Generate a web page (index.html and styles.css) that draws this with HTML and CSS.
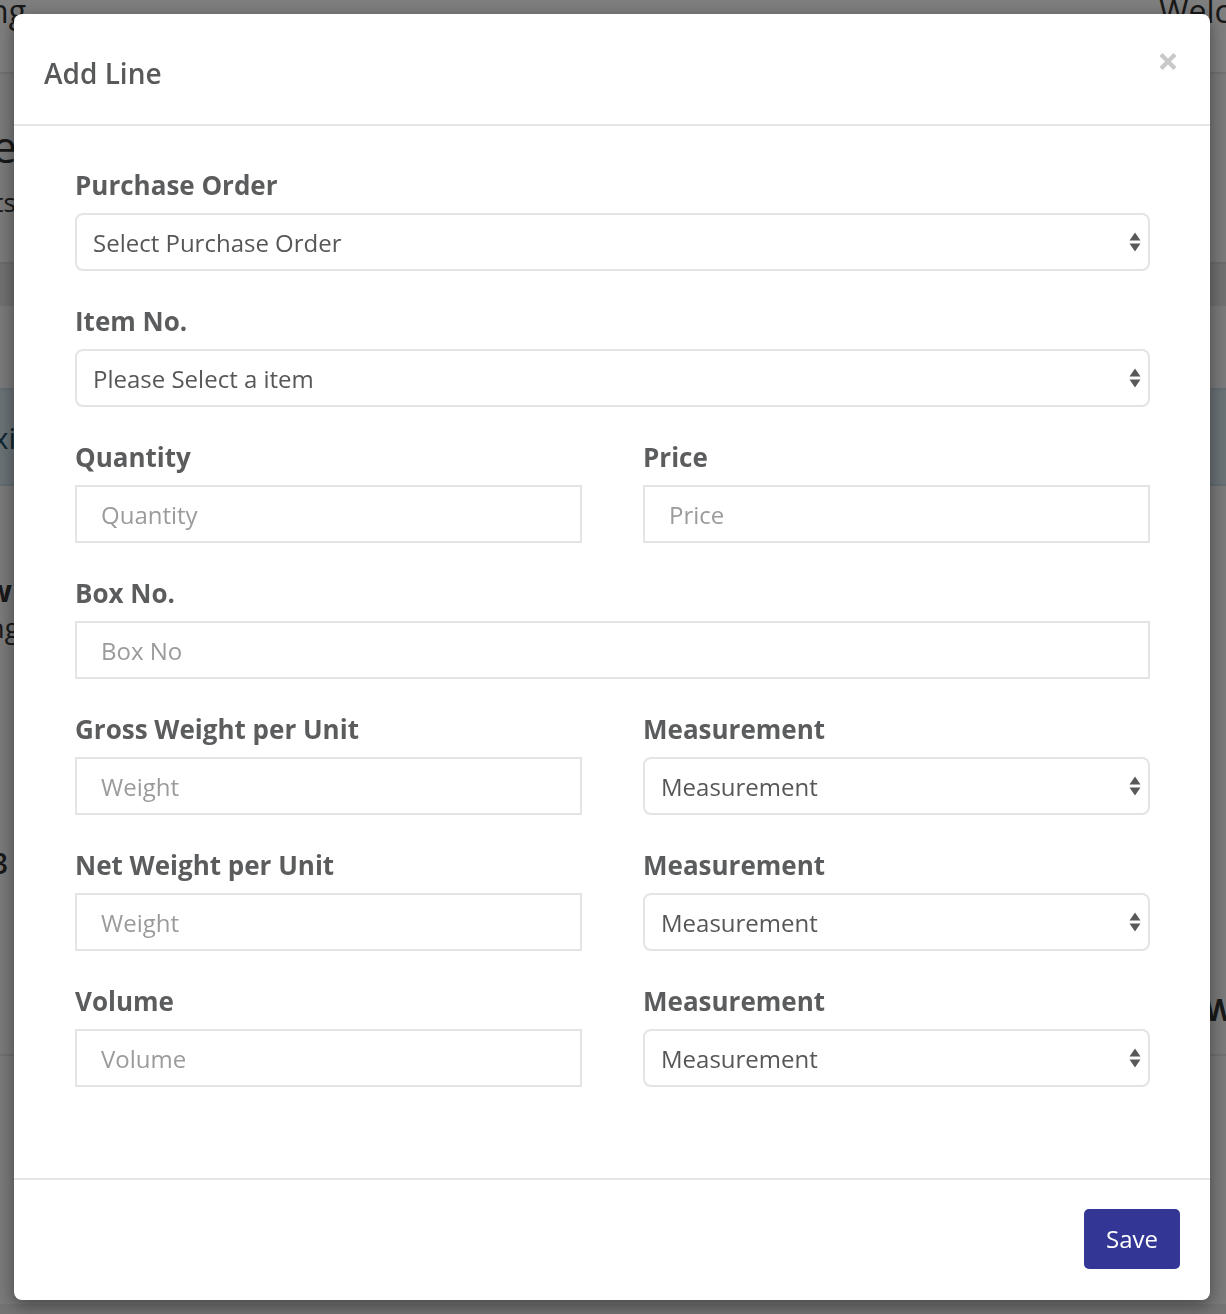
FILE: index.html
```html
<!DOCTYPE html>
<html lang="en">
<head>
<meta charset="utf-8">
<title>Add Line</title>
<link rel="stylesheet" href="styles.css">
</head>
<body>
<div class="page">
  <header class="topbar">
    <div class="cut"><span>Tracking</span></div>
    <div class="nav-right">Welcome, Admin</div>
  </header>
  <div class="page-head">
    <div class="cut big"><span>Shipme</span></div>
    <div class="cut sub"><span>Shipments</span></div>
  </div>
  <div class="toolbar"></div>
  <div class="gap1"></div>
  <div class="alert"><div class="cut alert-text"><span>Packing xi</span></div></div>
  <div class="section">
    <div class="cut bold-w"><span>New</span></div>
    <div class="cut small-ng"><span>Loading</span></div>
  </div>
  <div class="row3"><div class="cut num"><span>13</span></div></div>
  <div class="row-we"><div class="we">Weight</div></div>
  <div class="bottom-line"></div>
</div>

<div class="backdrop"></div>

<div class="modal" role="dialog" aria-labelledby="modalTitle">
  <div class="modal-header">
    <h4 class="modal-title" id="modalTitle">Add Line</h4>
    <button class="close" type="button" aria-label="Close">
      <svg width="20" height="19" viewBox="0 0 20 19" aria-hidden="true"><path d="M3 2.5 L17 16.5 M17 2.5 L3 16.5" stroke="#c9c9c9" stroke-width="4.4" stroke-linecap="butt"/></svg>
    </button>
  </div>
  <div class="modal-body">
    <div class="form-group">
      <label class="label">Purchase Order</label>
      <div class="select-wrap">
        <select class="control select"><option>Select Purchase Order</option></select>
        <svg class="arrows" width="12" height="20" viewBox="0 0 12 20" aria-hidden="true"><path d="M6 0.5 L11.5 8.5 L0.5 8.5 Z M0.5 11.5 L11.5 11.5 L6 19.5 Z" fill="#595959"/></svg>
      </div>
    </div>
    <div class="form-group">
      <label class="label">Item No.</label>
      <div class="select-wrap">
        <select class="control select"><option>Please Select a item</option></select>
        <svg class="arrows" width="12" height="20" viewBox="0 0 12 20" aria-hidden="true"><path d="M6 0.5 L11.5 8.5 L0.5 8.5 Z M0.5 11.5 L11.5 11.5 L6 19.5 Z" fill="#595959"/></svg>
      </div>
    </div>
    <div class="grid2">
      <div class="form-group">
        <label class="label">Quantity</label>
        <input class="control input" type="text" placeholder="Quantity">
      </div>
      <div class="form-group">
        <label class="label">Price</label>
        <input class="control input" type="text" placeholder="Price">
      </div>
    </div>
    <div class="form-group">
      <label class="label">Box No.</label>
      <input class="control input" type="text" placeholder="Box No">
    </div>
    <div class="grid2">
      <div class="form-group">
        <label class="label">Gross Weight per Unit</label>
        <input class="control input" type="text" placeholder="Weight">
      </div>
      <div class="form-group">
        <label class="label">Measurement</label>
        <div class="select-wrap">
          <select class="control select"><option>Measurement</option></select>
          <svg class="arrows" width="12" height="20" viewBox="0 0 12 20" aria-hidden="true"><path d="M6 0.5 L11.5 8.5 L0.5 8.5 Z M0.5 11.5 L11.5 11.5 L6 19.5 Z" fill="#595959"/></svg>
        </div>
      </div>
      <div class="form-group">
        <label class="label">Net Weight per Unit</label>
        <input class="control input" type="text" placeholder="Weight">
      </div>
      <div class="form-group">
        <label class="label">Measurement</label>
        <div class="select-wrap">
          <select class="control select"><option>Measurement</option></select>
          <svg class="arrows" width="12" height="20" viewBox="0 0 12 20" aria-hidden="true"><path d="M6 0.5 L11.5 8.5 L0.5 8.5 Z M0.5 11.5 L11.5 11.5 L6 19.5 Z" fill="#595959"/></svg>
        </div>
      </div>
      <div class="form-group">
        <label class="label">Volume</label>
        <input class="control input" type="text" placeholder="Volume">
      </div>
      <div class="form-group">
        <label class="label">Measurement</label>
        <div class="select-wrap">
          <select class="control select"><option>Measurement</option></select>
          <svg class="arrows" width="12" height="20" viewBox="0 0 12 20" aria-hidden="true"><path d="M6 0.5 L11.5 8.5 L0.5 8.5 Z M0.5 11.5 L11.5 11.5 L6 19.5 Z" fill="#595959"/></svg>
        </div>
      </div>
    </div>
  </div>
  <div class="modal-footer">
    <button class="btn-save" type="button">Save</button>
  </div>
</div>
</body>
</html>
```

FILE: styles.css
```css
* { box-sizing: border-box; }
html, body { margin: 0; padding: 0; }
body {
  width: 1226px;
  height: 1314px;
  overflow: hidden;
  background: #f6f6f6;
  font-family: "Open Sans", "Noto Sans", sans-serif;
  color: #555;
}

/* background page (under the backdrop) */
.page { width: 1226px; height: 1314px; position: relative; overflow: hidden; }
.cut { display: flex; justify-content: flex-end; white-space: nowrap; overflow: visible; }
.topbar {
  height: 74px;
  background: #fff;
  border-bottom: 2px solid #e4e4e4;
  display: flex;
  justify-content: space-between;
  align-items: flex-start;
  font-size: 32px;
  line-height: 22px;
  color: #333;
}
.topbar .cut { width: 26px; }
.nav-right { width: 69px; white-space: nowrap; padding-left: 2px; }
.page-head { height: 188px; padding-top: 52px; }
.page-head .big { width: 17px; font-size: 44px; line-height: 40px; color: #333; }
.page-head .sub { width: 16px; font-size: 26px; line-height: 40px; margin-top: 16px; color: #333; }
.toolbar { height: 44px; background: #e3e3e3; border-top: 2px solid #d8d8d8; }
.gap1 { height: 82px; }
.alert { height: 98px; background: #d6e6ee; border-top: 2px solid #c6dce6; border-bottom: 2px solid #c6dce6; padding-top: 30px; }
.alert-text { width: 16px; font-size: 30px; color: #1f4d66; line-height: 36px; }
.section { padding-top: 90px; height: 300px; }
.bold-w { width: 12px; font-size: 30px; font-weight: 700; color: #333; line-height: 30px; }
.small-ng { width: 20px; font-size: 28px; color: #333; line-height: 34px; margin-top: 4px; }
.row3 { height: 190px; padding-top: 62px; }
.num { width: 8px; font-size: 28px; font-weight: 600; color: #333; line-height: 30px; }
.row-we { height: 80px; display: flex; justify-content: flex-end; align-items: center; border-bottom: 2px solid #e2e2e2; }
.we { width: 21px; white-space: nowrap; font-size: 30px; font-weight: 700; color: #333; margin-top: -12px; }
.bottom-line { position: absolute; left: 0; right: 0; bottom: 0; height: 10px; background: #e8e8e8; }

/* overlay */
.backdrop {
  position: fixed;
  inset: 0;
  background: rgba(0, 0, 0, 0.5);
}
.modal {
  position: absolute;
  left: 14px;
  top: 14px;
  width: 1196px;
  height: 1286px;
  background: #fff;
  border-radius: 8px;
  box-shadow: 0 5px 18px rgba(0, 0, 0, 0.45);
  display: flex;
  flex-direction: column;
}
.modal-header {
  height: 112px;
  padding: 38px 30px 0 30px;
  border-bottom: 2px solid #e5e5e5;
  display: flex;
  justify-content: space-between;
  align-items: flex-start;
}
.modal-title {
  margin: 0;
  font-size: 28px;
  line-height: 42px;
  font-weight: 600;
  color: #58595b;
}
.close {
  margin: 0 2px 0 0;
  padding: 0;
  border: 0;
  background: none;
  width: 20px;
  height: 19px;
  cursor: pointer;
  line-height: 0;
}
.modal-body {
  flex: 1;
  padding: 42px 60px 0 61px;
}
.form-group { margin-bottom: 33px; }
.label {
  display: block;
  font-size: 26px;
  line-height: 34px;
  font-weight: 700;
  color: #5b5c5e;
  margin-bottom: 11px;
}
.grid2 {
  display: grid;
  grid-template-columns: 507px 507px;
  column-gap: 61px;
}
.control {
  display: block;
  width: 100%;
  height: 58px;
  margin: 0;
  font-family: "Open Sans", "Noto Sans", sans-serif;
  font-size: 24px;
  color: #575757;
  background: #fff;
  outline: none;
}
.input {
  border: 2px solid #e4e4e4;
  border-radius: 1px;
  padding: 0 24px;
}
.input::placeholder { color: #9b9b9b; opacity: 1; }
.select-wrap { position: relative; }
.select {
  -webkit-appearance: none;
  appearance: none;
  border: 2px solid #e4e4e4;
  border-radius: 8px;
  padding: 0 40px 0 16px;
}
.arrows {
  position: absolute;
  right: 9px;
  top: 19px;
  pointer-events: none;
}
.modal-footer {
  height: 122px;
  border-top: 2px solid #e5e5e5;
  display: flex;
  justify-content: flex-end;
  align-items: flex-start;
  padding: 29px 30px 0 0;
}
.btn-save {
  width: 96px;
  height: 60px;
  border: 0;
  border-radius: 5px;
  background: #333694;
  color: #fff;
  font-family: "Open Sans", "Noto Sans", sans-serif;
  font-size: 24px;
  line-height: 60px;
  padding: 0;
  cursor: pointer;
}
```
